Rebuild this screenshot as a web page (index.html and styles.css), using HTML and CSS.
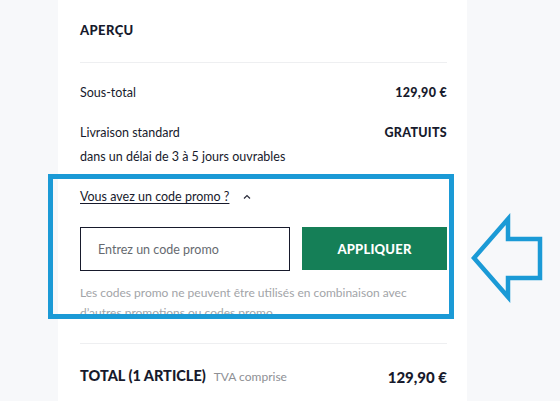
FILE: index.html
```html
<!DOCTYPE html>
<html lang="fr">
<head>
<meta charset="utf-8">
<link rel="stylesheet" href="styles.css">
</head>
<body>
<div class="page">
  <section class="card">
    <h2 class="title">APERÇU</h2>
    <hr class="divider">
    <div class="row row-sub">
      <span>Sous-total</span>
      <span class="strong">129,90 €</span>
    </div>
    <div class="row row-ship">
      <div>
        <div>Livraison standard</div>
        <div>dans un délai de 3 à 5 jours ouvrables</div>
      </div>
      <span class="strong">GRATUITS</span>
    </div>
    <div class="promo">
      <div class="promo-toggle">
        <span class="promo-link">Vous avez un code promo ?</span>
        <svg class="chev" width="8" height="6" viewBox="0 0 8 6"><path d="M1 4.5 L4 1.5 L7 4.5" fill="none" stroke="#2a2c3a" stroke-width="1.2"/></svg>
      </div>
      <div class="promo-form">
        <div class="input">Entrez un code promo</div>
        <div class="btn">APPLIQUER</div>
      </div>
      <p class="note">Les codes promo ne peuvent être utilisés en combinaison avec d’autres promotions ou codes promo.</p>
      <div class="highlight"></div>
    </div>
    <hr class="divider divider-total">
    <div class="row row-total">
      <span><span class="total-label">TOTAL (1 ARTICLE)</span><span class="vat">TVA comprise</span></span>
      <span class="total-price">129,90 €</span>
    </div>
  </section>
  <svg class="arrow" width="80" height="100" viewBox="465 205 80 100">
    <path d="M474 258 L508 219 L508 239 L540 239 L540 278 L508 278 L508 297 Z" fill="none" stroke="#1b9ad6" stroke-width="4.5" stroke-linejoin="miter"/>
  </svg>
</div>
</body>
</html>
```
FILE: styles.css
```css
* { box-sizing: border-box; }
html, body { margin: 0; padding: 0; }
body {
  background: #f7f8fa;
  font-family: "Lato", "Noto Sans", sans-serif;
  color: #171a2c;
  width: 560px;
  height: 401px;
  overflow: hidden;
}
.page {
  position: relative;
  height: 401px;
}
.card {
  margin-left: 58px;
  width: 409px;
  height: 401px;
  background: #ffffff;
  padding: 20px 20px 0 22px;
}
.title {
  margin: 0;
  font-size: 13px;
  line-height: 20px;
  font-weight: 900;
  letter-spacing: 0.4px;
}
.divider {
  border: 0;
  border-top: 1px solid #eeeff1;
  margin: 22px 0 0;
}
.row {
  display: flex;
  justify-content: space-between;
  align-items: flex-start;
  font-size: 12.5px;
}
.row-sub { margin-top: 20px; line-height: 20px; }
.row-ship { margin-top: 18px; line-height: 24px; }
.strong { font-weight: 900; font-size: 12.5px; letter-spacing: 0.3px; }
.promo { position: relative; margin-top: 18px; }
.promo-toggle {
  display: flex;
  align-items: center;
  gap: 14px;
  line-height: 20px;
  font-size: 12.5px;
}
.promo-link {
  text-decoration: underline;
  text-underline-offset: 2px;
}
.promo-form {
  display: flex;
  gap: 12px;
  margin-top: 20px;
}
.input {
  width: 210px;
  height: 44px;
  border: 1px solid #171a2c;
  padding-left: 17px;
  display: flex;
  align-items: center;
  font-size: 12.5px;
  color: #666a70;
}
.btn {
  width: 145px;
  height: 43px;
  background: #157f57;
  color: #ffffff;
  font-weight: 900;
  font-size: 13px;
  display: flex;
  align-items: center;
  justify-content: center;
  letter-spacing: 0.2px;
}
.note {
  margin: 12px 0 0;
  font-size: 12px;
  line-height: 20px;
  color: #a2a4a8;
  width: 350px;
}
.highlight {
  position: absolute;
  left: -32px;
  top: -13px;
  width: 406px;
  height: 145px;
  border: 5px solid #1b9ad6;
}
.divider-total { margin-top: 20px; }
.row-total {
  margin-top: 20px;
  line-height: 24px;
  align-items: center;
}
.total-label { font-weight: 900; font-size: 14.5px; }
.vat { color: #8e9095; font-size: 12px; margin-left: 8px; }
.total-price { font-weight: 900; font-size: 15px; }
.arrow {
  position: absolute;
  left: 465px;
  top: 205px;
}
```
